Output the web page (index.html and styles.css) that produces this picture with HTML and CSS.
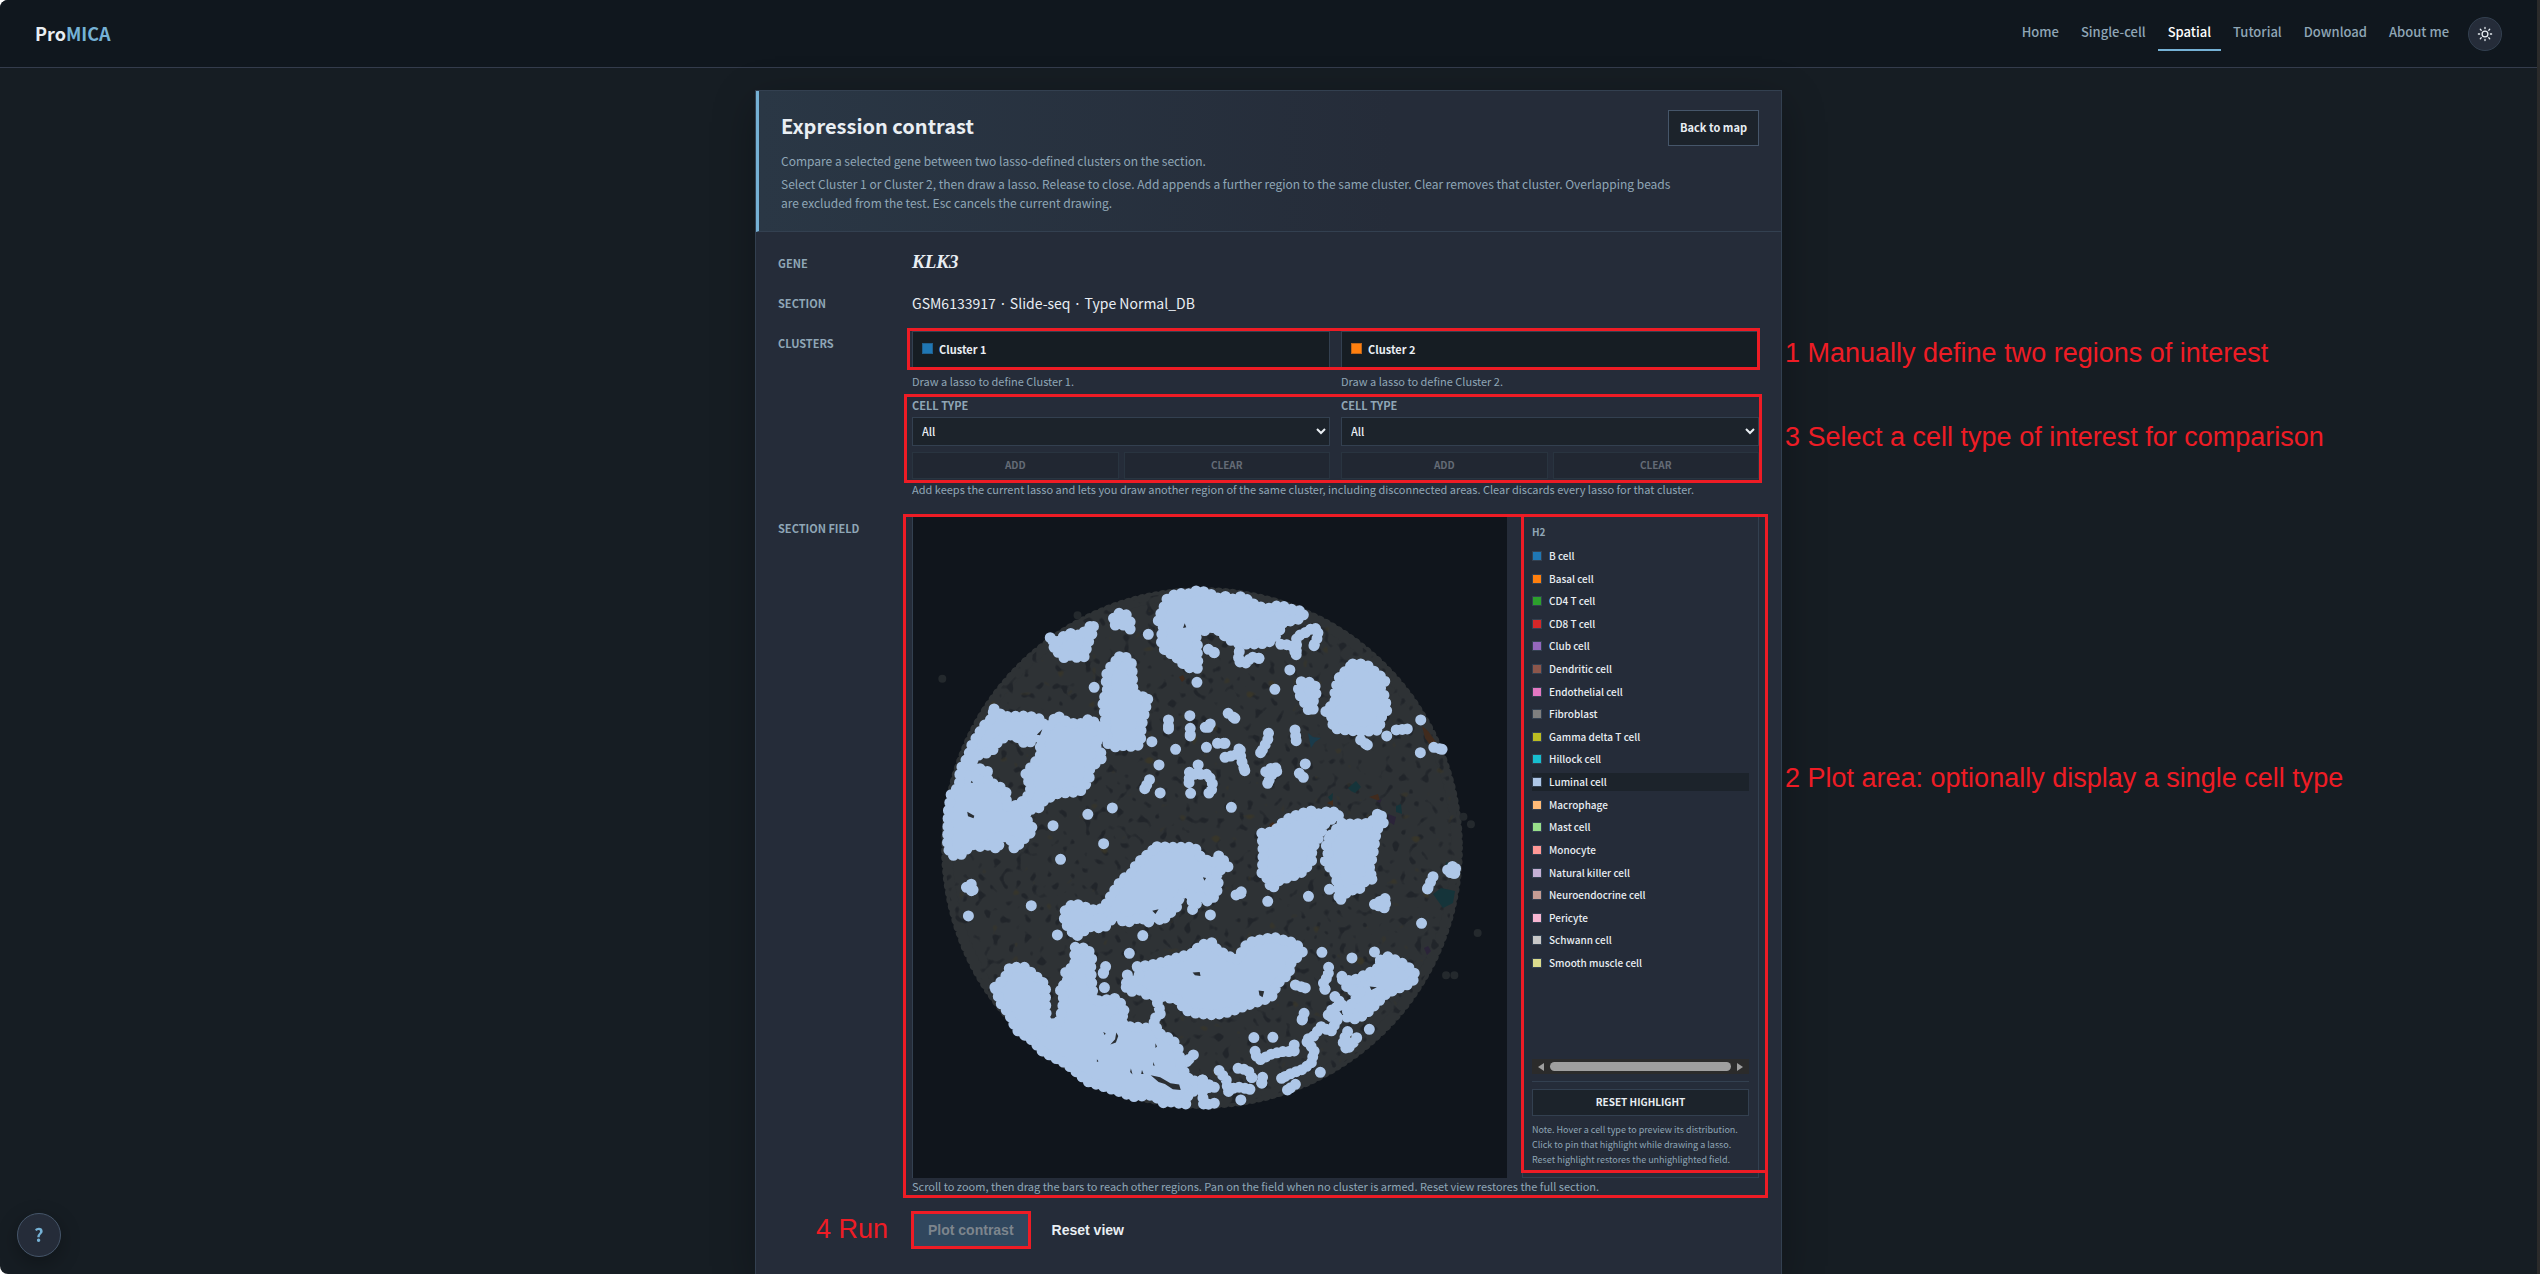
FILE: index.html
```html
<!DOCTYPE html>
<html lang="en">
<head>
<meta charset="utf-8">
<meta name="viewport" content="width=device-width, initial-scale=1">
<title>ProMICA - Spatial</title>
<link rel="stylesheet" href="styles.css">
</head>
<body>
<div class="page">
  <header class="topbar">
    <a class="brand" href="#">Pro<span class="brand-accent">MICA</span></a>
    <nav class="nav">
      <a href="#">Home</a>
      <a href="#">Single-cell</a>
      <a href="#" class="active" aria-current="page">Spatial</a>
      <a href="#">Tutorial</a>
      <a href="#">Download</a>
      <a href="#">About me</a>
      <button class="theme" type="button" aria-label="Switch theme">
        <svg viewBox="0 0 16 16" width="16" height="16" fill="none" stroke="currentColor" stroke-width="1.3" stroke-linecap="round"><circle cx="8" cy="8" r="2.9"/><path d="M8 1.4v1.2M8 13.4v1.2M1.4 8h1.2M13.4 8h1.2M3.3 3.3l.9.9M11.8 11.8l.9.9M12.7 3.3l-.9.9M4.2 11.8l-.9.9"/></svg>
      </button>
    </nav>
  </header>

  <main class="main">
    <section class="card">
      <div class="card-head">
        <div>
          <h1>Expression contrast</h1>
          <p>Compare a selected gene between two lasso-defined clusters on the section.</p>
        </div>
        <button class="back" type="button">Back to map</button>
        <p class="how-to">Select Cluster 1 or Cluster 2, then draw a lasso. Release to close. Add appends a further region to the same cluster. Clear removes that cluster. Overlapping beads are excluded from the test. Esc cancels the current drawing.</p>
      </div>

      <div class="card-body">
        <div class="row">
          <div class="row-label">Gene</div>
          <div class="gene">KLK3</div>
        </div>
        <div class="row">
          <div class="row-label">Section</div>
          <div class="section-name">GSM6133917 · Slide-seq · Type Normal_DB</div>
        </div>
        <div class="row">
          <div class="row-label">Clusters</div>
          <div class="clusters">
            <div class="pair marked">
              <button class="cluster" type="button"><span class="swatch" style="background:#1f77b4"></span>Cluster 1</button>
              <button class="cluster" type="button"><span class="swatch" style="background:#ff7f0e"></span>Cluster 2</button>
              <span class="mark mark-clusters"></span>
              <span class="callout">1 Manually define two regions of interest</span>
            </div>
            <div class="pair hints">
              <p class="hint">Draw a lasso to define Cluster 1.</p>
              <p class="hint">Draw a lasso to define Cluster 2.</p>
            </div>
            <div class="pair marked">
              <div class="cell-type">
                <label for="type1">Cell type</label>
                <select id="type1"><option>All</option></select>
                <div class="edit"><button type="button" disabled>Add</button><button type="button" disabled>Clear</button></div>
              </div>
              <div class="cell-type">
                <label for="type2">Cell type</label>
                <select id="type2"><option>All</option></select>
                <div class="edit"><button type="button" disabled>Add</button><button type="button" disabled>Clear</button></div>
              </div>
              <span class="mark mark-types"></span>
              <span class="callout callout-types">3 Select a cell type of interest for comparison</span>
            </div>
            <p class="hint hint-after">Add keeps the current lasso and lets you draw another region of the same cluster, including disconnected areas. Clear discards every lasso for that cluster.</p>
          </div>
        </div>

        <div class="row row-field">
          <div class="row-label">Section field</div>
          <div class="field marked">
            <div class="field-grid">
              <div class="plot">
                <svg class="scatter" viewBox="913 516 594 662" preserveAspectRatio="xMidYMid meet" role="img" aria-label="Luminal cell distribution">
                  <defs>
                    <clipPath id="disc"><circle cx="1202" cy="848" r="257"/></clipPath>
                    <filter id="gaps" x="0" y="0" width="100%" height="100%" color-interpolation-filters="sRGB">
                      <feTurbulence type="fractalNoise" baseFrequency=".13 .12" numOctaves="1" seed="7"/>
                      <feColorMatrix values="0 0 0 0 .13  0 0 0 0 .145  0 0 0 0 .165  10 0 0 0 -6"/>
                    </filter>
                    <filter id="tints" x="0" y="0" width="100%" height="100%" color-interpolation-filters="sRGB">
                      <feTurbulence type="fractalNoise" baseFrequency=".09" numOctaves="1" seed="21"/>
                      <feColorMatrix values="0 0 0 0 .22  0 0 0 0 .21  0 0 0 0 .16  0 10 0 0 -7"/>
                    </filter>
                  </defs>
                  <circle class="bead-edge" cx="1202" cy="848" r="255"/>
                  <g clip-path="url(#disc)">
                    <rect x="940" y="585" width="524" height="526" filter="url(#gaps)"/>
                    <rect x="940" y="585" width="524" height="526" filter="url(#tints)"/>
                  </g>
                  <g>
                    <path fill="#15343a" d="M1348 788l8-7 5 6-6 6-4-2zM1328 797l5-4-1 10zM1396 806l5-2 1 10-6-2zM1433 894l8-6 14 3-2 12-10 5zM1446 862l8 3-3 9-6-2z"/>
                    <path fill="#412b1d" d="M1422 726l6 5 8 11-3 7-8-11zM1269 825l4-3 7 5-5 6zM1369 797l9-3 2 7-6-2zM1327 803l6-3v6zM1179 677l4-2 2 4-3 3z"/>
                    <path fill="#2b2439" d="M1388 814l8 3-2 8-5-3zM1376 801l6-2-2 4zM1424 948l4-2 3 5-4 4z"/>
                    <path fill="#1a3b4b" d="M1308 733l5 4 8 1-6 4-4 6z"/>
                  </g>
                  <g transform="translate(900 510) scale(.3954 .3333)">
                    <path class="stray" d="M449 316h0M107 506h0M1444 943h0M1425 920h0M1461 1269h0M1381 1396h0M1402 1396h0"/>
                    <g class="blob">
                      <path d="M380 383L398 395L415 378L437 368L455 378L475 355L490 340L488 365L475 400L466 440L450 445L435 432L418 447L405 430L388 420L392 400Z"/>
                      <path d="M540 325L550 310L570 310L582 335L583 358L565 345L542 345Z"/>
                      <path d="M668 290L675 268L703 248L722 255L755 240L785 252L800 265L820 258L840 268L866 258L885 275L905 290L935 295L960 285L990 298L1022 305L1018 325L990 332L965 340L958 370L930 400L895 402L860 402L835 390L815 372L795 350L770 362L745 365L752 395L752 430L754 475L735 475L708 455L695 435L672 425L662 405L660 380L668 355L652 330Z"/>
                      <path d="M555 440L566 435L585 460L588 495L588 530L600 560L628 560L620 600L610 650L608 700L595 712L570 705L548 712L525 700L522 650L516 600L512 572L525 545L520 500L530 475Z"/>
                      <path d="M238 597L262 620L325 618L362 630L362 648L345 665L340 690L318 702L285 672L250 690L232 725L190 738L178 765L222 785L222 815L250 828L270 850L268 890L300 885L330 850L330 830L318 790L340 760L355 735L355 690L375 650L398 615L410 630L450 645L482 625L500 650L520 650L515 680L490 700L515 740L480 775L478 810L455 845L400 850L365 870L350 895L320 900L318 925L338 960L310 990L290 1018L278 985L250 975L250 1018L225 1005L200 1010L178 1003L160 1032L130 1037L120 1010L122 905L130 850L150 830L152 780L172 740L182 705L210 650L232 625Z"/>
                      <path d="M1145 462L1178 462L1200 485L1228 510L1215 535L1225 558L1232 600L1215 625L1212 660L1170 665L1130 660L1095 655L1095 625L1075 602L1100 580L1100 540L1112 500L1130 480Z"/>
                      <path d="M1015 515L1045 518L1055 540L1045 575L1045 605L1033 600L1020 570L1005 545Z"/>
                      <path d="M915 970L945 965L975 930L1000 917L1038 902L1060 912L1090 902L1112 915L1095 925L1075 940L1058 985L1045 1010L1040 1035L1042 1050L1020 1085L990 1100L960 1110L940 1138L930 1105L915 1095L918 1050L918 1010Z"/>
                      <path d="M1090 975L1118 940L1140 942L1190 940L1212 905L1225 935L1205 960L1200 1000L1195 1040L1190 1060L1185 1085L1200 1105L1175 1115L1160 1140L1135 1140L1110 1175L1110 1140L1100 1090L1075 1055L1083 1035L1078 1005Z"/>
                      <path d="M650 1010L690 1012L745 1012L760 1040L790 1060L808 1035L830 1070L800 1085L805 1115L800 1155L780 1175L760 1160L740 1200L738 1155L710 1150L700 1190L660 1235L650 1215L625 1240L610 1220L570 1240L545 1215L515 1255L480 1250L445 1280L415 1235L418 1200L440 1180L490 1200L515 1195L535 1155L560 1110L585 1090L600 1060L625 1035Z"/>
                    </g>
                    <path class="string" d="M780 418L795 428M858 425L855 455L880 460L885 440L908 445M963 403L990 405L1002 432L1003 400L1003 380L1030 365L1045 352L1058 360L1055 385L1047 405M1165 690L1182 705M1255 660L1283 657M1350 712L1371 718M679 630V657M734 655V675M772 652L787 640L775 660M830 610L847 625M803 700H822M822 742L850 735L860 710L862 745L872 782M932 670L930 690L912 730M999 660L1002 692M1010 790L1020 802M631 809L619 836M732 787L731 818M745 793L780 793L790 820L787 850L775 848M925 785L945 770L958 780L940 795L930 820"/>
                    <path class="dots" d="M628 373h0M491 532h0M751 517h0M986 480h0M948 538h0M733 617h0M637 695h0M697 718h0M775 712h0M1025 762h0M655 765h0M754 765h0M658 849h0M735 850h0M537 894h0M475 913h0M387 947h0M515 1001h0M838 892h0M1231 678h0M1317 630h0M1316 728h0M847 625h0M795 428h0M1182 705h0M1283 657h0M1371 718h0M679 657h0M734 678h0M822 700h0M872 782h0M912 728h0M1002 692h0M1020 802h0M619 836h0M731 818h0M930 820h0M908 445h0M1002 434h0M1047 407h0"/>
                    <g transform="translate(0 1020)">
                      <g class="blob">
                        <path d="M240 412L265 385L278 352L315 352L345 380L368 405L368 450L370 505L372 520L400 522L408 490L415 450L403 412L425 400L418 362L442 350L442 292L475 295L485 325L482 355L485 400L490 455L545 445L562 465L570 495L545 510L580 530L630 535L655 550L690 570L705 600L710 650L735 695L765 690L790 712L760 715L730 730L722 765L690 755L668 760L640 735L590 740L555 725L515 710L475 695L440 660L420 640L385 620L355 600L340 575L295 540L275 490L255 460Z"/>
                        <path d="M600 350L635 345L670 335L705 322L740 310L760 285L790 278L802 300L850 330L868 300L880 278L910 270L945 262L1000 280L1018 305L985 345L985 370L955 400L940 440L920 450L880 465L835 485L795 495L750 490L720 480L705 450L665 440L625 435L610 420L580 425L565 400L590 395L605 375Z"/>
                        <path d="M1215 330L1235 320L1270 340L1298 362L1304 380L1292 400L1230 430L1210 455L1180 490L1155 508L1125 500L1140 465L1165 425L1135 420L1112 375L1140 395L1185 370L1215 350Z"/>
                      </g>
                      <path class="string" d="M742 615L725 635M655 550L640 510L660 490L650 455V430M168 112L180 102L187 128L172 114M520 350L514 370M850 135L868 122L855 140M1200 163L1228 145V175L1205 165M1348 80L1334 117M1385 60L1402 45L1408 65L1398 75L1385 60M1000 405L1025 414M1084 352L1083 380L1070 395L1075 418M1022 490L1017 510M1100 440L1120 465L1095 475L1080 500L1110 500L1090 545L1065 530L1045 560L1025 570L1048 600L1040 640L1015 660L990 670L965 685M1132 545L1120 575L1130 600L1145 580L1160 555M1000 703L980 720M997 585V605L968 605L940 612L910 630L895 610L900 600M855 655L880 660L890 685M917 682L915 700M807 662L825 690L830 725L850 710L885 718M765 690V730L768 765L795 760V742"/>
                      <path class="dots" d="M332 167h0M173 198h0M398 255h0M614 257h0M580 310h0M575 375h0M517 413h0M785 195h0M930 154h0M1033 139h0M1086 118h0M406 28h0M1319 220h0M1067 307h0M1200 306h0M1143 324h0M895 563h0M943 562h0M1187 538h0M1063 667h0M862 750h0M795 712h0M725 635h0M514 370h0M1334 117h0M1025 414h0M1075 418h0M1017 510h0M965 685h0M980 720h0M885 718h0M890 683h0M915 698h0M1392 62h0M1400 70h0"/>
                      <path fill="#2b2f33" d="M740 368l18-2 2 12-14-2zM907 422l14 2-4 18-8-6zM1188 410l18 2-14 8zM638 182l16-4-8 14zM766 82l8 2-4 8zM547 548l5 10-6 20-14 6 12-16zM634 676l24 6 26 18 22 4 4 16-20-2-20-16-16-6zM584 656l4 18-6-8zM612 660l4 12-6 0zM646 580l4 10-4 4zM641 636l3 12-4-2zM514 546l6 4-2 6zM498 628l4 6-4 2z"/>
                    </g>
                    <path fill="#2b2f33" d="M720 340l4 12-8 2zM170 905l18 12-2 8-14-6zM181 812l4 6-6 0zM360 658l-14 16 8 2z"/>
                  </g>
                </svg>
              </div>
              <aside class="legend">
                <h2>H2</h2>
                <div class="legend-scroll">
                  <div class="legend-list">
                    <button type="button"><span style="background:#1f77b4"></span>B cell</button>
                    <button type="button"><span style="background:#ff7f0e"></span>Basal cell</button>
                    <button type="button"><span style="background:#2ca02c"></span>CD4 T cell</button>
                    <button type="button"><span style="background:#d62728"></span>CD8 T cell</button>
                    <button type="button"><span style="background:#9467bd"></span>Club cell</button>
                    <button type="button"><span style="background:#8c564b"></span>Dendritic cell</button>
                    <button type="button"><span style="background:#e377c2"></span>Endothelial cell</button>
                    <button type="button"><span style="background:#7f7f7f"></span>Fibroblast</button>
                    <button type="button"><span style="background:#bcbd22"></span>Gamma delta T cell</button>
                    <button type="button"><span style="background:#17becf"></span>Hillock cell</button>
                    <button type="button" class="pinned"><span style="background:#aec7e8"></span>Luminal cell</button>
                    <button type="button"><span style="background:#ffbb78"></span>Macrophage</button>
                    <button type="button"><span style="background:#98df8a"></span>Mast cell</button>
                    <button type="button"><span style="background:#ff9896"></span>Monocyte</button>
                    <button type="button"><span style="background:#c5b0d5"></span>Natural killer cell</button>
                    <button type="button"><span style="background:#c49c94"></span>Neuroendocrine cell</button>
                    <button type="button"><span style="background:#f7b6d2"></span>Pericyte</button>
                    <button type="button"><span style="background:#c7c7c7"></span>Schwann cell</button>
                    <button type="button"><span style="background:#dbdb8d"></span>Smooth muscle cell</button>
                  </div>
                  <div class="hscroll">
                    <svg width="6" height="8" viewBox="0 0 6 8"><path fill="#9f9f9f" d="M6 0v8L0 4z"/></svg>
                    <span class="thumb"></span>
                    <svg width="6" height="8" viewBox="0 0 6 8"><path fill="#9f9f9f" d="M0 0v8l6-4z"/></svg>
                  </div>
                </div>
                <div class="legend-foot">
                  <button class="reset-highlight" type="button">Reset highlight</button>
                  <p>Note. Hover a cell type to preview its distribution. Click to pin that highlight while drawing a lasso. Reset highlight restores the unhighlighted field.</p>
                </div>
                <span class="mark mark-legend"></span>
              </aside>
            </div>
            <p class="hint">Scroll to zoom, then drag the bars to reach other regions. Pan on the field when no cluster is armed. Reset view restores the full section.</p>
            <span class="mark mark-field"></span>
            <span class="callout callout-field">2 Plot area: optionally display a single cell type</span>
          </div>
        </div>

        <div class="row row-actions">
          <div></div>
          <div class="actions">
            <div class="marked">
              <button class="run" type="button" disabled>Plot contrast</button>
              <span class="mark mark-run"></span>
              <span class="callout callout-run">4 Run</span>
            </div>
            <button class="reset-view" type="button">Reset view</button>
          </div>
        </div>
      </div>
    </section>
  </main>
  <button class="help" type="button" aria-label="Help">?</button>
</div>
</body>
</html>
```

FILE: styles.css
```css
:root {
  --bg: #161d23;
  --bar: #10171e;
  --card: #252c39;
  --well: #1c232b;
  --line: #334050;
  --text: #e9eef3;
  --muted: #8fa6b6;
  --accent: #75b1d5;
  --mark: #ee1c25;
  --ui: "Noto Sans CJK KR", "Noto Sans", sans-serif;
}

* { box-sizing: border-box; }

html { background: #fff; }

body {
  margin: 0;
  font-family: var(--ui);
  font-size: 12px;
  line-height: 16px;
  color: var(--text);
}

h1, h2, p { margin: 0; }

button, select { font-family: inherit; color: inherit; }

.page {
  display: flex;
  flex-direction: column;
  min-height: 100vh;
  background: var(--bg);
  border-right: 3px solid #2b2b2b;
  border-radius: 8px 0 0 8px;
  overflow: hidden;
}

.topbar {
  display: flex;
  align-items: center;
  justify-content: space-between;
  height: 68px;
  padding: 0 35px;
  background: var(--bar);
  border-bottom: 1px solid #343c4c;
}

.brand {
  padding-bottom: 2px;
  font-size: 18px;
  line-height: 24px;
  font-weight: 700;
  color: var(--text);
  text-decoration: none;
}

.brand-accent { color: var(--accent); }

.nav { display: flex; align-items: center; gap: 2px; }

.nav a {
  padding: 6px 10px 8px;
  border-bottom: 2px solid transparent;
  font-size: 13px;
  line-height: 18px;
  font-weight: 500;
  color: var(--muted);
  text-decoration: none;
}

.nav a.active { color: #fff; border-color: var(--accent); }

.theme {
  display: grid;
  place-items: center;
  width: 34px;
  height: 34px;
  margin-left: 7px;
  padding: 0;
  background: var(--card);
  border: 1px solid var(--line);
  border-radius: 50%;
}

.main {
  flex: 1;
  display: flex;
  justify-content: center;
  padding-top: 22px;
}

.card {
  width: 100%;
  max-width: 1027px;
  background: var(--card);
  border: 1px solid var(--line);
  border-bottom: 0;
  box-shadow: 0 12px 40px rgba(0, 0, 0, .28);
}

.card-head {
  display: grid;
  grid-template-columns: minmax(0, 1fr) auto;
  align-items: start;
  row-gap: 4px;
  padding: 19px 22px;
  border-left: 3px solid var(--accent);
  border-bottom: 1px solid var(--line);
  background: linear-gradient(90deg, #2a3745, var(--card) 62%);
}

.card-head h1 {
  margin-bottom: 9px;
  font-size: 20px;
  line-height: 32px;
}

.card-head p { font-size: 12px; line-height: 19px; color: var(--muted); }

.how-to { grid-column: 1 / -1; max-width: 904px; }

.back {
  height: 36px;
  padding: 0 11px 2px;
  font-size: 11px;
  font-weight: 700;
  background: var(--well);
  border: 1px solid #46566a;
  white-space: nowrap;
}

.card-body { padding: 19px 22px 20px; }

.row {
  display: grid;
  grid-template-columns: 134px minmax(0, 1fr);
}

.row + .row { margin-top: 16px; }
.row + .row-field { margin-top: 19px; }
.row + .row-actions { margin-top: 18px; }

.row-label {
  font-size: 11px;
  line-height: 24px;
  font-weight: 700;
  text-transform: uppercase;
  color: var(--muted);
}

.gene {
  font-family: "Liberation Serif", serif;
  font-size: 19px;
  line-height: 22px;
  font-style: italic;
  font-weight: 700;
}

.section-name { font-size: 14px; line-height: 24px; }

.marked { position: relative; }

.pair {
  display: grid;
  grid-template-columns: 1fr 1fr;
  gap: 11px;
}

.cluster {
  display: flex;
  align-items: center;
  gap: 6px;
  height: 37px;
  padding: 0 9px 2px;
  font-size: 11px;
  font-weight: 700;
  background: var(--bg);
  border: 1px solid var(--line);
}

.swatch {
  width: 11px;
  height: 11px;
  border: 1px solid rgba(37, 44, 57, .3);
}

.hints { margin: 5px 0 8px; }

.hint { font-size: 11px; line-height: 16px; color: var(--muted); }
.hint-after { margin-top: 2px; }

.cell-type label {
  display: block;
  margin-bottom: 4px;
  font-size: 11px;
  line-height: 16px;
  font-weight: 700;
  text-transform: uppercase;
  color: var(--muted);
}

.cell-type select {
  display: block;
  width: 100%;
  height: 29px;
  padding: 0 5px 2px;
  font-size: 11px;
  font-weight: 500;
  background: var(--well);
  border: 1px solid var(--line);
  border-radius: 0;
}

.edit {
  display: grid;
  grid-template-columns: 1fr 1fr;
  gap: 5px;
  margin-top: 6px;
}

.edit button {
  height: 27px;
  padding: 0 0 2px;
  font-size: 10px;
  font-weight: 700;
  text-transform: uppercase;
  color: #646b76;
  background: #212732;
  border: 1px solid #293440;
}

.field-grid {
  display: grid;
  grid-template-columns: minmax(0, 1fr) 237px;
  gap: 15px;
}

.plot { background: #10151c; border-left: 1px solid var(--line); }

.scatter { display: block; width: 100%; height: auto; }

.bead-edge { fill: #2e3235; stroke: #2e3235; stroke-width: 12; stroke-linecap: round; stroke-dasharray: 0 7; }

.stray, .blob path, .string, .dots {
  fill: none;
  stroke: #aec7e8;
  stroke-width: 11px;
  vector-effect: non-scaling-stroke;
  stroke-linecap: round;
  stroke-linejoin: round;
}

.stray { stroke: #24292d; stroke-width: 8px; }
.blob path { fill: #aec7e8; stroke-dasharray: 0 8; }
.string { stroke-dasharray: 0 6; }

.legend {
  position: relative;
  display: flex;
  flex-direction: column;
  padding: 7px 9px 10px;
  border: 1px solid var(--line);
}

.legend h2 {
  margin-bottom: 7px;
  font-size: 10px;
  line-height: 16px;
  color: var(--muted);
}

.legend-scroll {
  flex: 1;
  display: flex;
  flex-direction: column;
  justify-content: space-between;
}

.legend-list {
  display: flex;
  flex-direction: column;
  justify-content: space-between;
  height: 425px;
}

.legend-list button {
  display: flex;
  align-items: center;
  gap: 7px;
  height: 18px;
  padding: 0;
  font-size: 10px;
  line-height: 18px;
  font-weight: 500;
  background: none;
  border: 0;
}

.legend-list .pinned { background: var(--well); }

.legend-list span { width: 10px; height: 10px; border: 1px solid var(--line); }

.hscroll {
  display: flex;
  align-items: center;
  gap: 6px;
  height: 15px;
  padding: 0 6px;
  background: #2b2b2b;
}

.thumb { flex: 1; height: 9px; border-radius: 5px; background: #9f9f9f; }

.legend-foot {
  margin-top: 7px;
  padding-top: 7px;
  border-top: 1px solid var(--line);
}

.reset-highlight {
  display: block;
  width: 100%;
  height: 27px;
  margin-bottom: 6px;
  padding: 0 0 2px;
  font-size: 10px;
  font-weight: 700;
  text-transform: uppercase;
  background: var(--well);
  border: 1px solid var(--line);
}

.legend-foot p { font-size: 9px; line-height: 15px; color: var(--muted); }

.actions { display: flex; align-items: center; gap: 6px; }

.run, .reset-view {
  display: block;
  height: 36px;
  padding: 0 16px;
  font-family: "Liberation Sans", sans-serif;
  font-size: 14px;
  font-weight: 700;
  border: 0;
  background: none;
}

.run { background: #30475e; color: #7d858d; }

/* Step marks drawn over the form */
.mark { position: absolute; border: 3px solid var(--mark); pointer-events: none; }
.mark-clusters { inset: -3px -1px -2px -5px; }
.mark-types { inset: -3px -3px -4px -8px; }
.mark-field { inset: -2px -9px -4px -9px; }
.mark-legend { inset: -3px -10px 4px -2px; }
.mark-run { inset: -1px; }

.callout {
  position: absolute;
  left: 100%;
  top: 6px;
  margin-left: 26px;
  font-family: "Liberation Sans", sans-serif;
  font-size: 27px;
  line-height: 32px;
  color: var(--mark);
  white-space: nowrap;
}

.callout-types { top: 24px; }
.callout-field { top: 246px; }
.callout-run { left: auto; right: 100%; top: 1px; margin: 0 24px 0 0; }

.help {
  position: fixed;
  left: 17px;
  bottom: 17px;
  width: 44px;
  height: 44px;
  padding: 0 0 2px;
  font-size: 18px;
  font-weight: 700;
  color: var(--accent);
  background: var(--card);
  border: 1px solid #46566a;
  border-radius: 50%;
  box-shadow: 0 6px 20px rgba(0, 0, 0, .3);
}
```
